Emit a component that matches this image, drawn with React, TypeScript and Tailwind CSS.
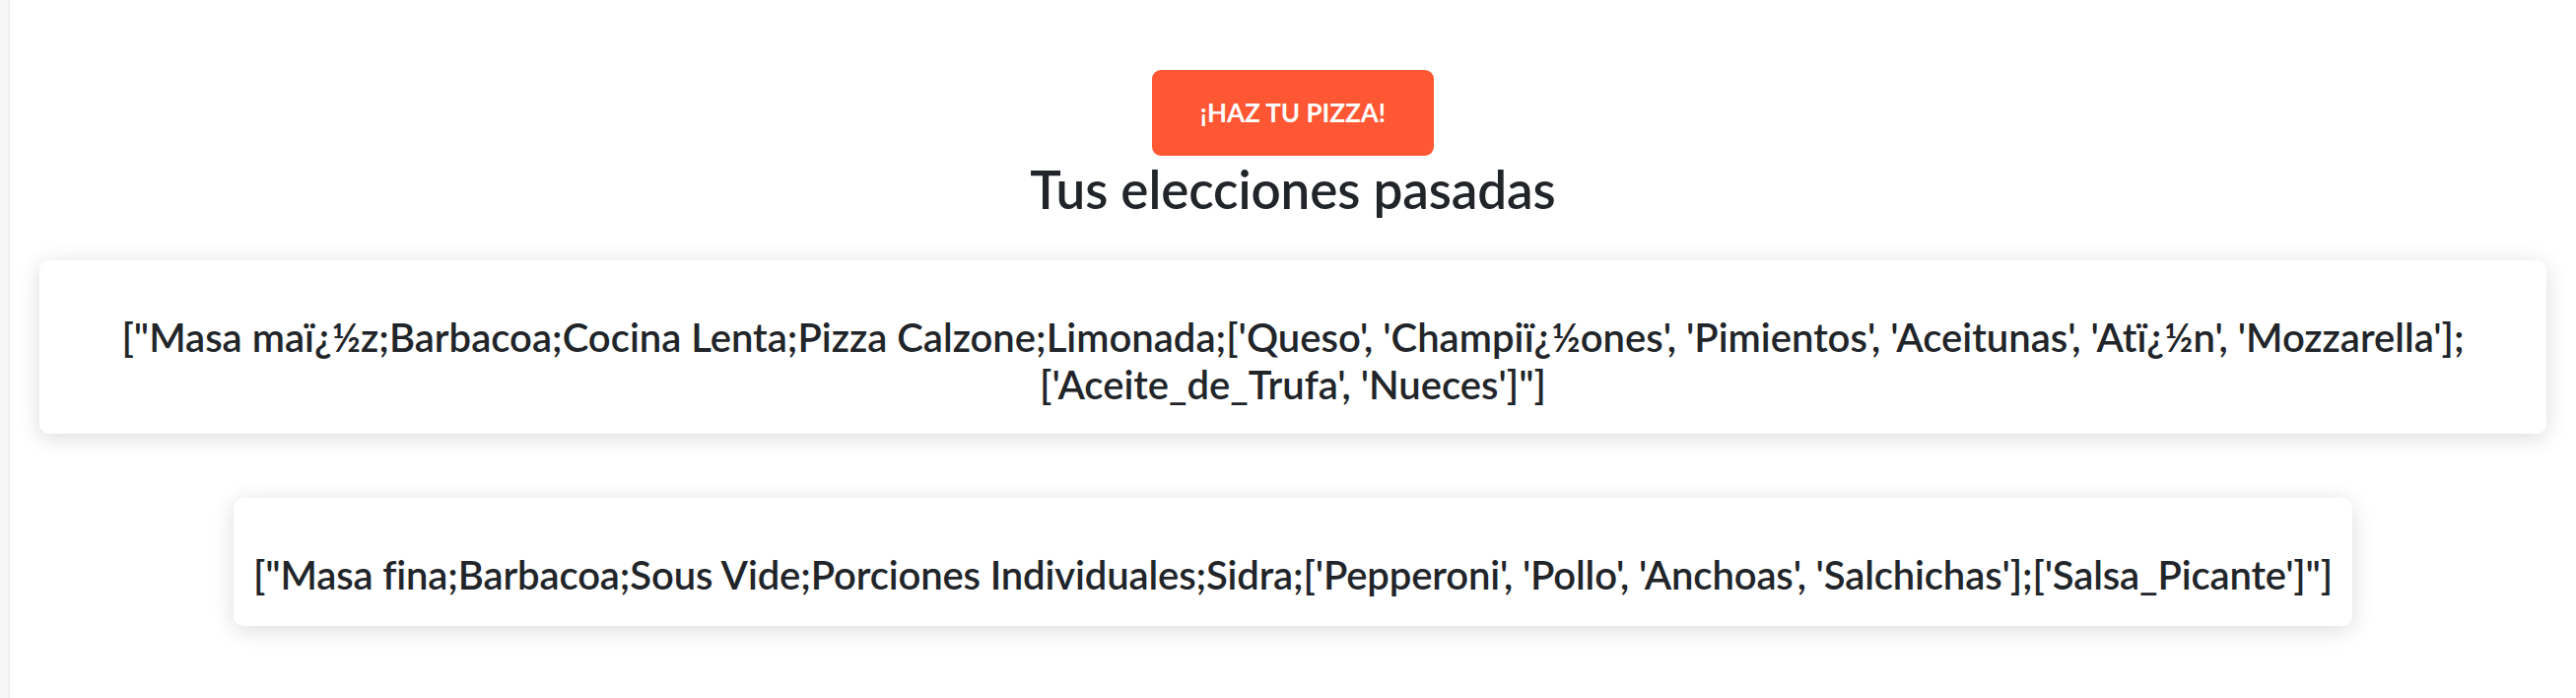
import React from "react";

const font = { fontFamily: "Lato, 'Liberation Sans', sans-serif" };

export default function App() {
  return (
    <div className="flex min-h-[708px] bg-white text-[#212529] [font-variant-ligatures:none]" style={font}>
      <div className="w-[10px] shrink-0 bg-[#f6f6f6] border-r border-[#e9e9e9]" />
      <main className="flex-1 px-[30px] text-center">
        <div className="flex flex-col items-center pt-[71px]">
          <button className="w-[286px] h-[87px] rounded-[9px] bg-[#ff5733] text-white font-bold text-[26px]">
            ¡HAZ TU PIZZA!
          </button>
          <h2 className="mt-[2px] text-[53px] leading-[64px] font-semibold tracking-[-0.1px]">
            Tus elecciones pasadas
          </h2>
        </div>
        <div className="mt-[40px] flex flex-col items-center gap-[65px]">
          <div className="w-full rounded-[10px] bg-white px-[20px] pt-[54px] pb-[26px] shadow-[0_4px_22px_rgba(0,0,0,0.14)]">
            <h4 className="text-[40px] leading-[48px] font-semibold">
              ["Masa maï¿½z;Barbacoa;Cocina Lenta;Pizza Calzone;Limonada;['Queso', 'Champiï¿½ones', 'Pimientos', 'Aceitunas', 'Atï¿½n', 'Mozzarella'];
              <br />
              ['Aceite_de_Trufa', 'Nueces']"]
            </h4>
          </div>
          <div className="w-fit rounded-[10px] bg-white px-[20px] pt-[54px] pb-[28px] shadow-[0_4px_22px_rgba(0,0,0,0.14)]">
            <h4 className="text-[40px] leading-[48px] font-semibold tracking-[-0.14px]">
              ["Masa fina;Barbacoa;Sous Vide;Porciones Individuales;Sidra;['Pepperoni', 'Pollo', 'Anchoas', 'Salchichas'];['Salsa_Picante']"]
            </h4>
          </div>
        </div>
      </main>
    </div>
  );
}
